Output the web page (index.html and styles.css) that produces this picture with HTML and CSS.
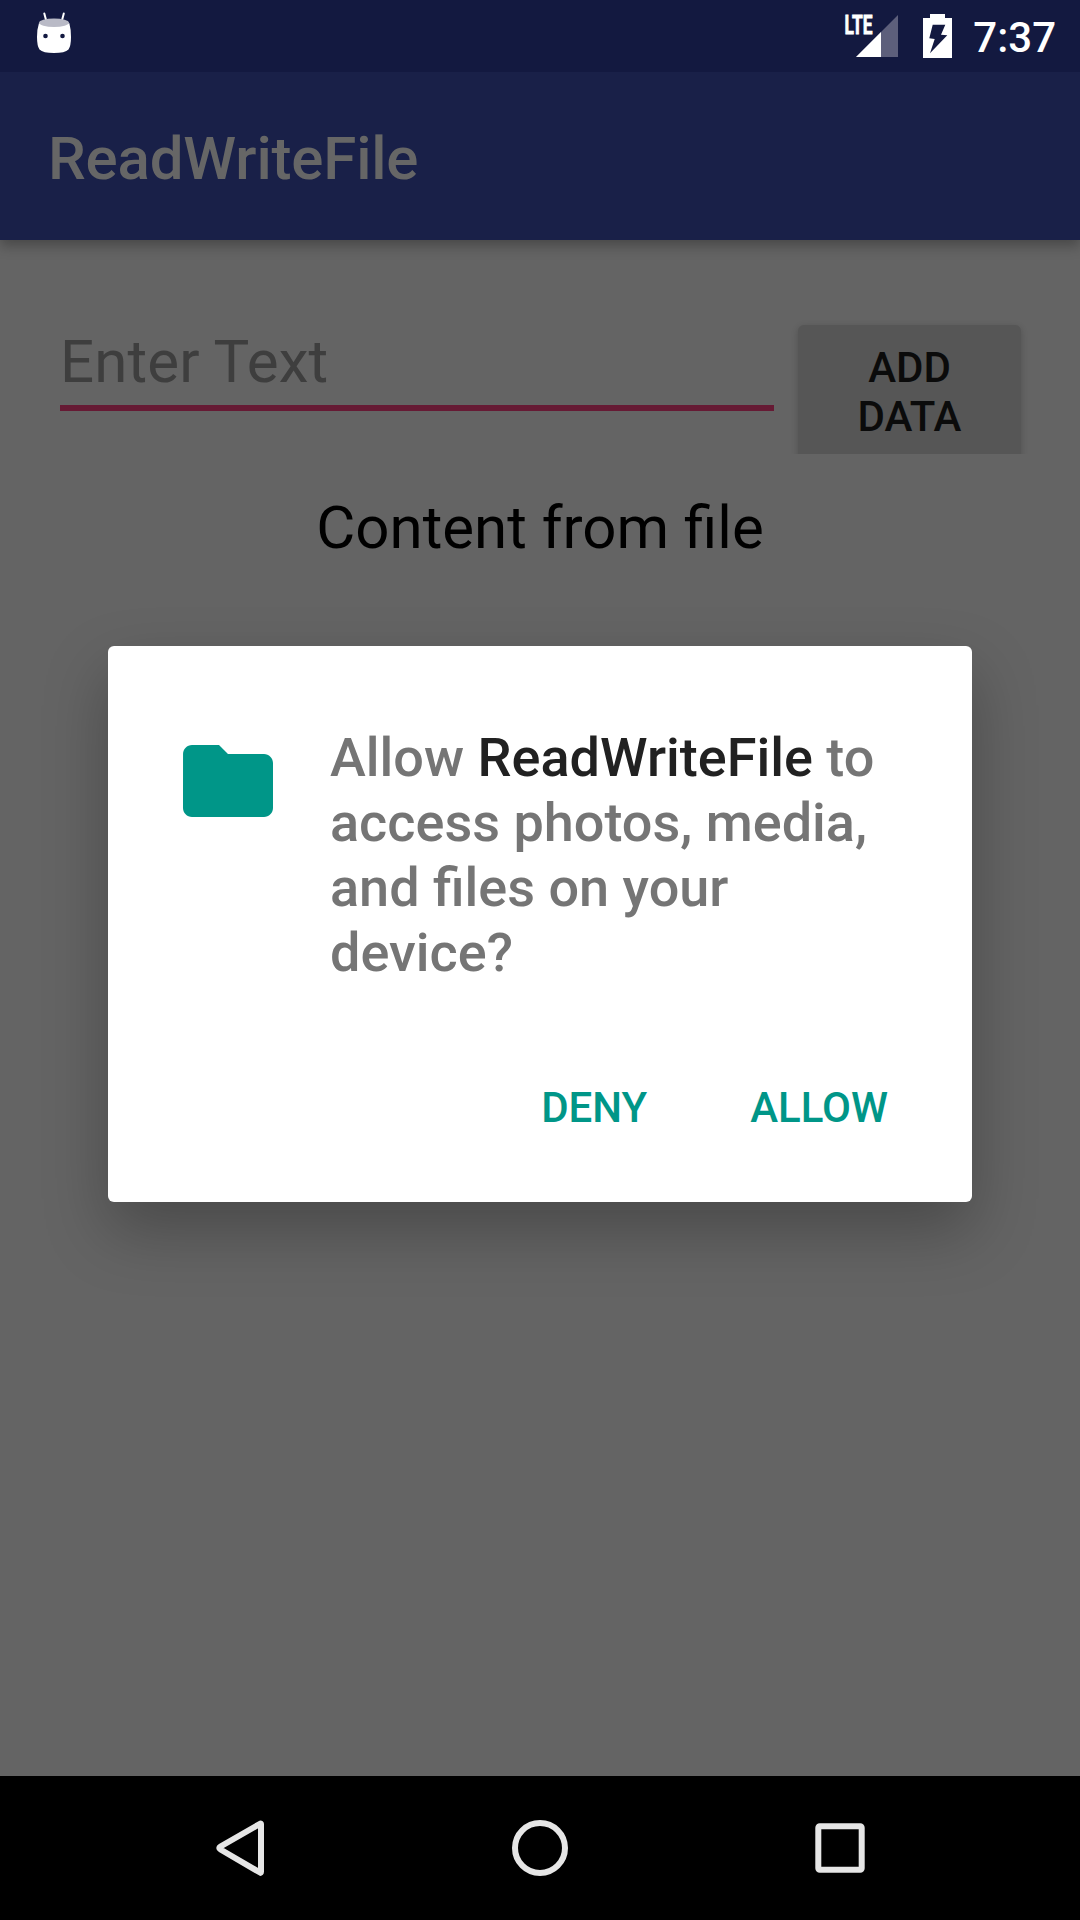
FILE: index.html
```html
<!DOCTYPE html>
<html lang="en">
<head>
<meta charset="utf-8">
<title>ReadWriteFile</title>
<link rel="stylesheet" href="styles.css">
</head>
<body>
<div class="screen">
  <header class="status-bar">
    <svg class="robot" width="36" height="60" viewBox="36 0 36 60">
      <path d="M44.3 13.5L46.3 21M63.8 13.5L61.8 21" stroke="#fff" stroke-width="2" stroke-linecap="round"/>
      <path d="M39 23Q54 29 69.300 23Q71 29 71 37Q71 46 68.500 49.500Q65 53 54 53Q43 53 39.500 49.500Q37 46 37 37Q37 29 39 23Z" fill="#fff"/>
      <ellipse cx="54" cy="22.800" rx="15" ry="4.200" fill="#b9bac6"/>
      <circle cx="45.500" cy="36" r="2.300" fill="#131940"/>
      <circle cx="62.500" cy="36" r="2.300" fill="#131940"/>
    </svg>
    <div class="status-icons">
      <svg width="56" height="60" viewBox="844 0 56 60">
        <path d="M856 57L898 15V57Z" fill="#5d5f7b"/>
        <path d="M856 57L881 32V57Z" fill="#fff"/>
        <text class="lte" x="844.500" y="33.500" textLength="28" lengthAdjust="spacingAndGlyphs">LTE</text>
      </svg>
      <svg class="battery" width="30" height="60" viewBox="923 0 30 60">
        <path d="M930 14H945V18H952V58H923V18H930Z" fill="#fff"/>
        <path d="M932.700 24.700H945.300L941 34.700L947.300 35.300L930 53.300L934.700 39L929.300 38.300Z" fill="#131940"/>
      </svg>
      <span class="clock">7:37</span>
    </div>
  </header>
  <div class="app-bar">ReadWriteFile</div>
  <main class="content">
    <div class="form-row">
      <div class="field">Enter Text</div>
      <div class="button-slot"><div class="add-button">ADD<br>DATA</div></div>
    </div>
    <div class="file-label">Content from file</div>
    <section class="dialog">
      <div class="dialog-body">
        <svg class="folder" width="108" height="108" viewBox="0 0 24 24"><path fill="#009688" d="M10 4H4c-1.100 0-1.990.900-1.990 2L2 18c0 1.100.900 2 2 2h16c1.100 0 2-.900 2-2V8c0-1.100-.900-2-2-2h-8l-2-2z"/></svg>
        <p class="message">Allow <span class="app-name">ReadWriteFile</span> to<br>access photos, media,<br>and files on your<br>device?</p>
      </div>
      <div class="actions"><span>DENY</span><span>ALLOW</span></div>
    </section>
  </main>
  <nav class="nav-bar">
    <svg width="60" height="60" viewBox="0 0 60 60"><path d="M50.500 5.500Q51 5 51 6.500V53.500Q51 55.500 50 54.500L10.500 31.500Q8 30 10.500 28.500Z" fill="none" stroke="#e6e6e6" stroke-width="6" stroke-linejoin="round"/></svg>
    <svg width="60" height="60" viewBox="0 0 60 60"><circle cx="30" cy="30" r="25" fill="none" stroke="#e6e6e6" stroke-width="6"/></svg>
    <svg width="60" height="60" viewBox="0 0 60 60"><rect x="8.300" y="8.300" width="43.400" height="43.400" rx="1.500" fill="none" stroke="#e6e6e6" stroke-width="6"/></svg>
  </nav>
</div>
</body>
</html>
```
FILE: styles.css
```css
* { box-sizing: border-box; }

body {
  margin: 0;
  background: #646464;
  font-family: Roboto, sans-serif;
}

svg { display: block; flex: none; }

.screen {
  display: flex;
  flex-direction: column;
  width: 1080px;
  height: 1920px;
  overflow: hidden;
}

.status-bar {
  z-index: 2;
  display: flex;
  justify-content: space-between;
  height: 72px;
  padding: 0 24px 0 36px;
  background: #131940;
}

.status-icons { display: flex; }
.battery { margin-left: 23px; }

.lte {
  fill: #fff;
  stroke: #fff;
  stroke-width: .8px;
  font-size: 26px;
  font-weight: 700;
}

.clock {
  margin-left: 20px;
  padding-top: 13px;
  color: #fff;
  font-size: 42px;
  font-weight: 500;
  line-height: 49px;
}

.app-bar {
  z-index: 1;
  height: 168px;
  padding: 52px 48px 0;
  background: #192048;
  box-shadow: 0 6px 12px rgba(0, 0, 0, .28);
  color: #666;
  font-size: 60px;
  font-weight: 500;
  letter-spacing: -.18px;
  line-height: 70px;
}

.content {
  flex: 1;
  background: #646464;
}

.form-row {
  display: flex;
  justify-content: space-between;
  height: 214px;
  padding: 72px 48px 0 60px;
}

.field {
  width: 714px;
  height: 99px;
  padding-top: 15px;
  border-bottom: 6px solid #661a34;
  color: #3e3e3e;
  font-size: 60px;
  letter-spacing: .15px;
  line-height: 70px;
}

.button-slot {
  width: 246px;
  height: 142px;
  padding: 13px 11px 0 12px;
  overflow: hidden;
}

.add-button {
  height: 136px;
  padding-top: 18px;
  border-radius: 6px;
  background: #565656;
  box-shadow: 0 2px 7px rgba(0, 0, 0, .2);
  color: #0b0b0b;
  font-size: 42px;
  font-weight: 500;
  line-height: 49px;
  text-align: center;
}

.file-label {
  height: 192px;
  padding-top: 39px;
  color: #000;
  font-size: 60px;
  line-height: 70px;
  text-align: center;
}

.dialog {
  width: 864px;
  height: 556px;
  margin: 0 auto;
  padding: 79px 84px 0 66px;
  border-radius: 6px;
  background: #fff;
  box-shadow: 0 28px 64px rgba(0, 0, 0, .27);
}

.dialog-body { display: flex; }
.folder { margin-top: 2px; }

.message {
  margin: 0 0 0 48px;
  color: #757575;
  font-size: 54px;
  font-weight: 500;
  line-height: 65px;
  white-space: nowrap;
}

.app-name { color: #212121; }

.actions {
  display: flex;
  justify-content: flex-end;
  gap: 103px;
  margin-top: 98px;
  color: #009688;
  font-size: 42px;
  font-weight: 500;
  line-height: 49px;
}

.nav-bar {
  display: flex;
  justify-content: space-between;
  align-items: center;
  height: 144px;
  padding: 0 210px;
  background: #000;
}
```
